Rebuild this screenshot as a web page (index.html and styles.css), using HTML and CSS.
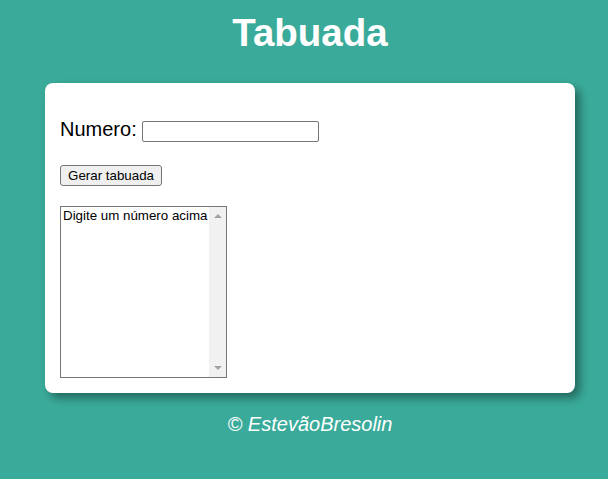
FILE: index.html
```html
<!DOCTYPE html>
<html lang="pt-BR">
<head>
<meta charset="utf-8">
<title>Tabuada</title>
<link rel="stylesheet" href="styles.css">
</head>
<body>
<div class="page">
  <h1 class="title">Tabuada</h1>
  <main class="card">
    <div class="row-number">
      <label class="label" for="num">Numero:</label>
      <input class="num-input" type="text" id="num">
    </div>
    <div class="row-button">
      <button class="btn" type="button">Gerar tabuada</button>
    </div>
    <div class="result" role="listbox">
      <div class="result-items">
        <div class="result-option" role="option">Digite um número acima</div>
      </div>
      <div class="scrollbar">
        <span class="arrow arrow-up"></span>
        <span class="arrow arrow-down"></span>
      </div>
    </div>
  </main>
  <footer class="footer">© EstevãoBresolin</footer>
</div>
</body>
</html>
```
FILE: styles.css
```css
html, body {
  margin: 0;
  padding: 0;
}
body {
  background: #3aab9a;
  font-family: "Liberation Sans", Arial, sans-serif;
  height: 479px;
  overflow: hidden;
}
.page {
  padding-left: 12px;
  display: flex;
  flex-direction: column;
  align-items: center;
}
.title {
  margin: 11px 0 0;
  font-size: 38.5px;
  font-weight: bold;
  color: #ffffff;
  line-height: 43px;
}
.card {
  margin-top: 29px;
  width: 500px;
  padding: 15px 15px 15px;
  background: #ffffff;
  border-radius: 8px;
  box-shadow: 5px 5px 10px rgba(0, 0, 0, 0.4);
}
.row-number {
  margin-top: 20px;
  display: flex;
  align-items: baseline;
  gap: 5px;
  height: 23px;
}
.label {
  font-size: 20px;
  color: #000;
}
.num-input {
  box-sizing: border-box;
  width: 177px;
  height: 21px;
  border: 1px solid #767676;
  border-radius: 2px;
  padding: 1px 2px;
  font: 13.33px "Liberation Sans", Arial, sans-serif;
  margin: 0;
}
.row-button {
  margin-top: 24px;
  display: flex;
}
.btn {
  box-sizing: border-box;
  width: 102px;
  height: 21px;
  margin: 0;
  padding: 1px 6px;
  font: 13.33px "Liberation Sans", Arial, sans-serif;
  color: #000;
  background: #efefef;
  border: 1px solid #767676;
  border-radius: 3px;
}
.result {
  display: flex;
  box-sizing: border-box;
  margin-top: 20px;
  width: 167px;
  height: 172px;
  border: 1px solid #767676;
  background: #fff;
}
.result-items {
  flex: 1;
  min-width: 0;
  overflow: hidden;
}
.result-option {
  padding: 1px 0 0 2px;
  font: 13.33px "Liberation Sans", Arial, sans-serif;
  color: #000;
  white-space: nowrap;
  line-height: 15px;
}
.scrollbar {
  width: 17px;
  flex: none;
  background: #f1f1f1;
  display: flex;
  flex-direction: column;
  justify-content: space-between;
  align-items: center;
  padding: 7px 0 7px;
}
.arrow {
  width: 0;
  height: 0;
  border-left: 4px solid transparent;
  border-right: 4px solid transparent;
}
.arrow-up {
  border-bottom: 4px solid #a3a3a3;
}
.arrow-down {
  border-top: 4px solid #a3a3a3;
}
.footer {
  margin-top: 20px;
  font-size: 20px;
  font-style: italic;
  color: #ffffff;
  line-height: 23px;
}
```
